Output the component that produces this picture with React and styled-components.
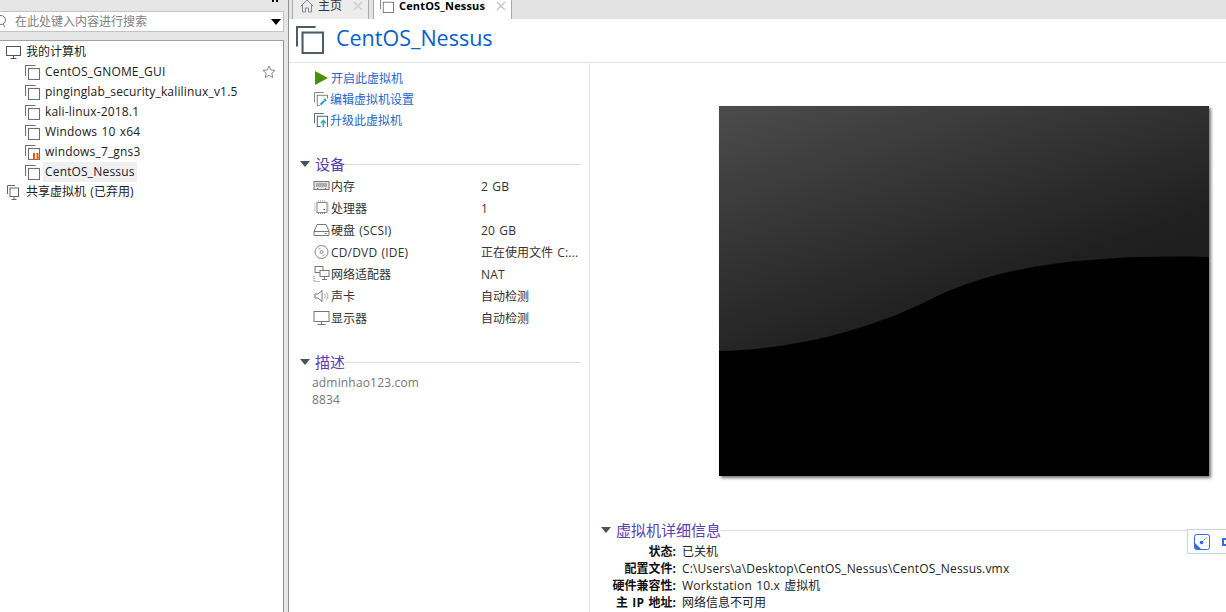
import React from "react";
import styled, { createGlobalStyle } from "styled-components";

const FONT = `"Open Sans", "Noto Sans CJK SC", "Noto Sans", sans-serif`;

const Global = createGlobalStyle`
  html, body { margin: 0; padding: 0; height: 612px; overflow: hidden; background: #fff; }
  #root { height: 612px; }
  * { box-sizing: border-box; }
`;

const Page = styled.div`
  display: flex;
  width: 1226px;
  height: 612px;
  overflow: hidden;
  font-family: ${FONT};
  font-size: 12px;
  color: #333;
  background: #fff;
`;

const LatinRun = styled.span`
  letter-spacing: 0.17px;
  word-spacing: 1px;
`;

const Mixed = ({ children }) =>
  String(children)
    .split(/([\x00-\x7f]+)/)
    .map((part, i) =>
      i % 2 ? <LatinRun key={i}>{part}</LatinRun> : part
    );

const Sidebar = styled.aside`
  width: 284px;
  flex: none;
  display: flex;
  flex-direction: column;
  background: #e6e6e6;
`;

const SidebarTop = styled.div`
  height: 11px;
  flex: none;
  display: flex;
  justify-content: flex-end;
  padding-right: 6px;
`;

const PinMarks = styled.svg`
  width: 6px;
  height: 2px;
  display: block;
`;

const SearchBox = styled.div`
  height: 21px;
  display: flex;
  align-items: center;
  background: #fff;
  border: 1px solid #c4c4c4;
  border-left: none;
  padding-right: 2px;
  color: #808080;
`;

const SearchLens = styled.svg`
  width: 8px;
  height: 14px;
  flex: none;
`;

const SearchText = styled.span`
  flex: 1;
  margin-left: 7px;
  font-size: 12px;
  line-height: 19px;
`;

const Caret = styled.span`
  width: 0;
  height: 0;
  border-left: 5px solid transparent;
  border-right: 5px solid transparent;
  border-top: 6px solid #000;
`;

const Tree = styled.div`
  margin-top: 8px;
  flex: 1;
  background: #fff;
  border-top: 1px solid #a0a0a0;
  border-right: 1px solid #8f8f8f;
  padding-top: 1px;
`;

const TreeRow = styled.div`
  height: 20px;
  display: flex;
  align-items: center;
  padding-left: ${(p) => p.$indent}px;
  position: relative;
  color: #222;
  white-space: nowrap;
`;

const TreeLabel = styled.span`
  margin-left: ${(p) => p.$gap}px;
  padding: 0 2px;
  line-height: 20px;
  background: ${(p) => (p.$selected ? "#f0f0f0" : "transparent")};
`;

const StarIcon = styled.svg`
  position: absolute;
  right: 7px;
  top: 3px;
  width: 14px;
  height: 14px;
`;

const Splitter = styled.div`
  width: 5px;
  flex: none;
  background: #e6e6e6;
  border-right: 1px solid #8f8f8f;
`;

const Main = styled.main`
  flex: 1;
  min-width: 0;
  display: flex;
  flex-direction: column;
`;

const TabBar = styled.div`
  height: 19px;
  flex: none;
  display: flex;
  background: #e3e3e3;
  padding-left: 3px;
`;

const Tab = styled.div`
  display: flex;
  align-items: center;
  height: 19px;
  width: ${(p) => p.$w}px;
  margin-right: ${(p) => p.$mr || 0}px;
  padding: 0 0 8px ${(p) => p.$pl}px;
  background: ${(p) => (p.$active ? "#fff" : "#ececec")};
  border-left: 1px solid #a8a8a8;
  border-right: 1px solid #a8a8a8;
  color: ${(p) => (p.$active ? "#000" : "#333")};
  font-weight: ${(p) => (p.$active ? 700 : 400)};
  font-size: ${(p) => (p.$active ? "11px" : "12px")};
  white-space: nowrap;
`;

const TabClose = styled.svg`
  width: 10px;
  height: 10px;
  margin-left: auto;
  margin-right: ${(p) => p.$mr}px;
  flex: none;
`;

const TabText = styled.span`
  margin-left: ${(p) => p.$gap}px;
  line-height: 11px;
`;

const Header = styled.header`
  height: 44px;
  flex: none;
  display: flex;
  align-items: center;
  padding: 0 0 2px 7px;
  border-bottom: 1px solid #e4e4e4;
`;

const Title = styled.h1`
  margin: 0 0 0 12px;
  font-size: 21.5px;
  font-weight: 400;
  color: #0a5fc9;
  line-height: 26px;
  position: relative;
  top: -2px;
`;

const Content = styled.div`
  flex: 1;
  min-height: 0;
  display: flex;
`;

const LeftColumn = styled.div`
  width: 301px;
  flex: none;
  border-right: 1px solid #e4e4e4;
  padding-top: 4px;
`;

const ActionRow = styled.div`
  height: 21px;
  display: flex;
  align-items: center;
  padding-left: ${(p) => p.$pl || 25}px;
  color: #1f66c8;
  white-space: nowrap;
`;

const ActionLabel = styled.span`
  margin-left: 2px;
`;

const Section = styled.section`
  margin-top: ${(p) => p.$mt}px;
`;

const SectionHead = styled.div`
  display: flex;
  align-items: center;
  height: 20px;
  padding-left: ${(p) => p.$pl}px;
`;

const Arrow = styled.span`
  width: 0;
  height: 0;
  border-left: 5px solid transparent;
  border-right: 5px solid transparent;
  border-top: 6px solid #46535c;
  flex: none;
`;

const SectionTitle = styled.span`
  margin-left: 5px;
  font-size: 15px;
  color: #5a3fb0;
  line-height: 20px;
  white-space: nowrap;
`;

const Rule = styled.span`
  flex: 1;
  height: 1px;
  background: #dcdcdc;
  margin-right: ${(p) => p.$mr || 0}px;
`;

const DeviceList = styled.div`
  margin-top: 1px;
`;

const DeviceRow = styled.div`
  height: 22px;
  display: grid;
  grid-template-columns: 18px 150px 1fr;
  align-items: center;
  padding-left: 24px;
  white-space: nowrap;
`;

const DeviceIcon = styled.svg`
  width: 17px;
  height: 16px;
`;

const DeviceName = styled.span`
  color: #333;
`;

const DeviceValue = styled.span`
  color: #333;
`;

const Description = styled.div`
  padding: 2px 0 0 23px;
  color: #777;
  line-height: 17px;
`;

const RightColumn = styled.div`
  flex: 1;
  min-width: 0;
  display: flex;
  flex-direction: column;
  position: relative;
`;

const Preview = styled.div`
  width: 490px;
  height: 370px;
  margin: 43px 0 0 129px;
  flex: none;
  background: #000;
  box-shadow: 2px 2px 3px rgba(0, 0, 0, 0.55);
`;

const PreviewArt = styled.svg`
  display: block;
  width: 490px;
  height: 370px;
`;

const Details = styled.div`
  margin-top: 44px;
`;

const DetailList = styled.div`
  margin-top: 3px;
`;

const DetailRow = styled.div`
  display: grid;
  grid-template-columns: 86px 1fr;
  column-gap: 6px;
  height: 17px;
  line-height: 17px;
  white-space: nowrap;
  color: #222;
`;

const DetailKey = styled.span`
  text-align: right;
  font-weight: 700;
  color: #111;
`;

const DetailValue = styled.span``;

const FloatTool = styled.div`
  position: absolute;
  right: 0;
  top: 466px;
  width: 39px;
  height: 25px;
  background: #fff;
  border: 1px solid #c9d4e6;
  border-right: none;
  display: flex;
  align-items: center;
  padding-left: 6px;
  gap: 12px;
`;

const FloatSvg = styled.svg`
  width: 16px;
  height: 16px;
  flex: none;
`;

const FloatStub = styled.span`
  width: 4px;
  height: 8px;
  border: 2px solid #2f6df0;
  border-right: none;
  flex: none;
`;

const VmIcon = ({ size = 15, color = "#6b6b6b", sw = 1, children }) => (
  <svg width={size} height={size} viewBox="0 0 15 15" fill="none" style={{ flex: "none" }}>
    <path d="M10.5 .5H.5V11" stroke={color} strokeWidth={sw} />
    <rect x="3.5" y="3.5" width="11" height="11" fill="#fff" stroke={color} strokeWidth={sw} />
    {children}
  </svg>
);

const Monitor = () => (
  <svg width="15" height="13" viewBox="0 0 15 13" fill="none" style={{ flex: "none" }}>
    <rect x=".5" y=".5" width="14" height="9" stroke="#555" />
    <path d="M7.5 10v2M4.5 12.5h6" stroke="#555" />
  </svg>
);

const SharedIcon = () => (
  <svg width="14" height="15" viewBox="0 0 14 15" fill="none" style={{ flex: "none" }}>
    <path d="M8 .5H.5V9" stroke="#666" />
    <rect x="3" y="3" width="8.5" height="8.5" fill="#fff" stroke="#666" />
    <path d="M7 12v2M4.5 14.5h5" stroke="#666" />
  </svg>
);

const devices = [
  { name: "内存", value: "2 GB", icon: <g stroke="#777" fill="none"><rect x=".5" y="3.5" width="15" height="8" fill="#e4e4e4" /><path d="M2.5 6h11M2.5 8h11M4 11.5v-1.5M12 11.5v-1.5" /></g> },
  { name: "处理器", value: "1", icon: <g stroke="#888" fill="none"><rect x="3.5" y="2.5" width="10" height="10" /><path d="M1 4h2M1 6h2M1 8h2M1 10h2M14 4h2M14 6h2M14 8h2M14 10h2M5 .5v2M7 .5v2M9 .5v2M11 .5v2M5 13v2M7 13v2M9 13v2M11 13v2" strokeDasharray="1 1" /><path d="M10 9.5h1.5" stroke="#555" /></g> },
  { name: "硬盘 (SCSI)", value: "20 GB", icon: <g stroke="#777" fill="none"><path d="M3.5 2.5h9l3 7v4H.5v-4zM.5 9.5h15" /><path d="M11 11.5h2" /></g> },
  { name: "CD/DVD (IDE)", value: "正在使用文件 C:...", icon: <g stroke="#888" fill="none"><circle cx="8" cy="8" r="6.5" /><circle cx="8" cy="8" r="1.5" /><path d="M5 5.5a4 4 0 0 1 2-1.2M11 10.5a4 4 0 0 1-2 1.2" /></g> },
  { name: "网络适配器", value: "NAT", icon: <g stroke="#777" fill="none"><rect x="1.5" y=".5" width="8" height="6" /><rect x="6.5" y="4.5" width="9" height="6" fill="#fff" /><path d="M11 11v2M8.5 13.5h5" /><path d="M.5 10v5.5h6" strokeDasharray="1 1" /></g> },
  { name: "声卡", value: "自动检测", icon: <g stroke="#777" fill="none"><path d="M1.5 6v4h3l4 3.5v-11l-4 3.5z" /><path d="M11 6a3 3 0 0 1 0 4M13 4.5a5 5 0 0 1 0 7" stroke="#aaa" /></g> },
  { name: "显示器", value: "自动检测", icon: <g stroke="#777" fill="none"><rect x=".5" y="1.5" width="15" height="10" /><path d="M8 12v2M4 14.5h8" /></g> },
];

export default function App() {
  return (
    <Page>
      <Global />
      <Sidebar>
        <SidebarTop>
          <PinMarks viewBox="0 0 6 2"><path d="M0 0h2v2H0zM4 0h2v2H4z" fill="#000" /></PinMarks>
        </SidebarTop>
        <SearchBox>
          <SearchLens viewBox="0 0 8 14" fill="none">
            <circle cx="1" cy="5" r="4.5" stroke="#777" />
            <path d="M3 9l2 3" stroke="#777" />
          </SearchLens>
          <SearchText>在此处键入内容进行搜索</SearchText>
          <Caret />
        </SearchBox>
        <Tree>
          <TreeRow $indent={6}>
            <Monitor />
            <TreeLabel $gap={3}>我的计算机</TreeLabel>
          </TreeRow>
          {["CentOS_GNOME_GUI", "pinginglab_security_kalilinux_v1.5", "kali-linux-2018.1", "Windows 10 x64", "windows_7_gns3", "CentOS_Nessus"].map((n, i) => (
            <TreeRow key={n} $indent={25}>
              <VmIcon size={15} color="#707070" sw={1.1}>
                {i === 4 && <path d="M9 8v7M12.5 8v7" stroke="#e8590c" strokeWidth="2" />}
              </VmIcon>
              <TreeLabel $gap={3} $selected={i === 5}><Mixed>{n}</Mixed></TreeLabel>
              {i === 0 && (
                <StarIcon viewBox="0 0 14 14" fill="none">
                  <path d="M7 1l1.8 4 4.2.4-3.2 2.9.9 4.2L7 10.3l-3.7 2.2.9-4.2L1 5.4 5.2 5z" stroke="#888" />
                </StarIcon>
              )}
            </TreeRow>
          ))}
          <TreeRow $indent={7}>
            <SharedIcon />
            <TreeLabel $gap={3}><Mixed>共享虚拟机 (已弃用)</Mixed></TreeLabel>
          </TreeRow>
        </Tree>
      </Sidebar>
      <Splitter />
      <Main>
        <TabBar>
          <Tab $w={77} $mr={4} $pl={7}>
            <svg width="14" height="14" viewBox="0 0 14 14" fill="none" style={{ flex: "none" }}>
              <path d="M.8 7.2L7 1l6.2 6.2M2.5 6v7h3V9h3v4h3V6" stroke="#888" />
            </svg>
            <TabText $gap={4}>主页</TabText>
            <TabClose $mr={5} viewBox="0 0 10 10"><path d="M1 1l8 8M9 1l-8 8" stroke="#d0d0d0" strokeWidth="1.6" /></TabClose>
          </Tab>
          <Tab $active $w={139} $pl={6}>
            <VmIcon size={14} color="#777" />
            <TabText $gap={5}><Mixed>CentOS_Nessus</Mixed></TabText>
            <TabClose $mr={5} viewBox="0 0 10 10"><path d="M1 1l8 8M9 1l-8 8" stroke="#c8c8c8" strokeWidth="1.6" /></TabClose>
          </Tab>
        </TabBar>
        <Header>
          <VmIcon size={28} color="#4a5a66" sw={1.1} />
          <Title>CentOS_Nessus</Title>
        </Header>
        <Content>
          <LeftColumn>
            <ActionRow $pl={26}>
              <svg width="14" height="14" viewBox="0 0 14 14" style={{ flex: "none" }}><path d="M0 0l13 7-13 7z" fill="#4b9000" /></svg>
              <ActionLabel>开启此虚拟机</ActionLabel>
            </ActionRow>
            <ActionRow>
              <VmIcon size={14} color="#7a7a7a">
                <rect x="6" y="7" width="9" height="8" fill="#fff" />
                <path d="M7 13.5l4-4" stroke="#1b8fd8" strokeWidth="2" />
                <path d="M11 7.5l2 2" stroke="#1b8fd8" strokeWidth="2" />
              </VmIcon>
              <ActionLabel>编辑虚拟机设置</ActionLabel>
            </ActionRow>
            <ActionRow>
              <VmIcon size={14} color="#4a5a66">
                <rect x="7" y="8" width="7" height="7" fill="#fff" />
                <path d="M10 15v-5M7.5 11L10 8l2.5 3" stroke="#22a8d8" strokeWidth="1.6" fill="none" />
              </VmIcon>
              <ActionLabel>升级此虚拟机</ActionLabel>
            </ActionRow>
            <Section $mt={24}>
              <SectionHead $pl={11}>
                <Arrow />
                <SectionTitle>设备</SectionTitle>
                <Rule $mr={8} />
              </SectionHead>
              <DeviceList>
                {devices.map((d) => (
                  <DeviceRow key={d.name}>
                    <DeviceIcon viewBox="0 0 16 16">{d.icon}</DeviceIcon>
                    <DeviceName><Mixed>{d.name}</Mixed></DeviceName>
                    <DeviceValue><Mixed>{d.value}</Mixed></DeviceValue>
                  </DeviceRow>
                ))}
              </DeviceList>
            </Section>
            <Section $mt={23}>
              <SectionHead $pl={11}>
                <Arrow />
                <SectionTitle>描述</SectionTitle>
                <Rule $mr={8} />
              </SectionHead>
              <Description><Mixed>adminhao123.com</Mixed><br /><Mixed>8834</Mixed></Description>
            </Section>
          </LeftColumn>
          <RightColumn>
            <Preview>
              <PreviewArt viewBox="0 0 490 370">
                <defs>
                  <linearGradient id="gloss" x1="0" y1="0" x2="0.72" y2="1">
                    <stop offset="0" stopColor="#4c4c4c" />
                    <stop offset="0.75" stopColor="#202020" />
                    <stop offset="1" stopColor="#1c1c1c" />
                  </linearGradient>
                </defs>
                <path d="M0 0H490V151C370 148 280 160 214 192C150 225 75 243 0 245Z" fill="url(#gloss)" />
              </PreviewArt>
            </Preview>
            <Details>
              <SectionHead $pl={11}>
                <Arrow />
                <SectionTitle>虚拟机详细信息</SectionTitle>
                <Rule />
              </SectionHead>
              <DetailList>
                <DetailRow><DetailKey><Mixed>状态:</Mixed></DetailKey><DetailValue>已关机</DetailValue></DetailRow>
                <DetailRow><DetailKey><Mixed>配置文件:</Mixed></DetailKey><DetailValue><Mixed>C:\Users\a\Desktop\CentOS_Nessus\CentOS_Nessus.vmx</Mixed></DetailValue></DetailRow>
                <DetailRow><DetailKey><Mixed>硬件兼容性:</Mixed></DetailKey><DetailValue><Mixed>Workstation 10.x 虚拟机</Mixed></DetailValue></DetailRow>
                <DetailRow><DetailKey><Mixed>主 IP 地址:</Mixed></DetailKey><DetailValue>网络信息不可用</DetailValue></DetailRow>
              </DetailList>
            </Details>
            <FloatTool>
              <FloatSvg viewBox="0 0 16 16" fill="none">
                <rect x=".5" y=".5" width="15" height="15" rx="2" stroke="#2f6df0" />
                <path d="M1 9l6 6H2.5A1.5 1.5 0 0 1 1 13.5z" fill="#2f6df0" />
                <circle cx="7.5" cy="8.5" r="1.8" fill="#2f6df0" />
                <path d="M8 8l4.5-4.5" stroke="#2f6df0" strokeDasharray="1.5 1" />
              </FloatSvg>
              <FloatStub />
            </FloatTool>
          </RightColumn>
        </Content>
      </Main>
    </Page>
  );
}
